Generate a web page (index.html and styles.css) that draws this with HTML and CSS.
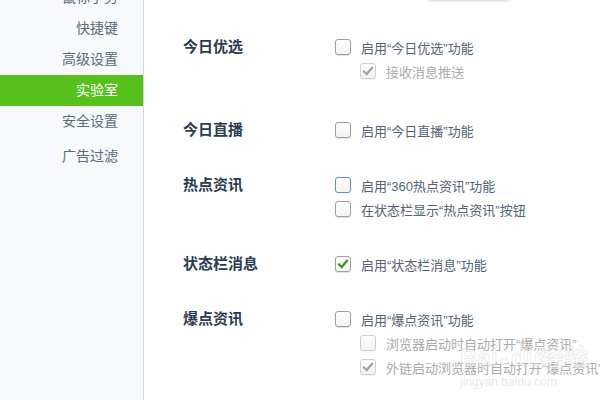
FILE: index.html
```html
<!DOCTYPE html>
<html lang="zh-CN">
<head>
<meta charset="utf-8">
<link rel="stylesheet" href="styles.css">
</head>
<body>
<div class="page">
  <nav class="sidebar">
    <div class="nav-item">鼠标手势</div>
    <div class="nav-item">快捷键</div>
    <div class="nav-item">高级设置</div>
    <div class="nav-item active">实验室</div>
    <div class="nav-item">安全设置</div>
    <div class="nav-item last">广告过滤</div>
  </nav>
  <main class="main">
    <div class="topbar"><div class="top-box"></div></div>

    <section class="section first">
      <div class="heading">今日优选</div>
      <div class="options">
        <div class="row"><span class="cb"></span><span class="label">启用“今日优选”功能</span></div>
        <div class="row sub disabled"><span class="cb checked gray"><svg viewBox="0 0 16 16"><path d="M3.5 8.5 L6.5 11.5 L12.5 4.5" /></svg></span><span class="label">接收消息推送</span></div>
      </div>
    </section>

    <section class="section">
      <div class="heading">今日直播</div>
      <div class="options">
        <div class="row"><span class="cb"></span><span class="label">启用“今日直播”功能</span></div>
      </div>
    </section>

    <section class="section">
      <div class="heading">热点资讯</div>
      <div class="options">
        <div class="row"><span class="cb focus"></span><span class="label">启用“360热点资讯”功能</span></div>
        <div class="row"><span class="cb"></span><span class="label">在状态栏显示“热点资讯”按钮</span></div>
      </div>
    </section>

    <section class="section">
      <div class="heading">状态栏消息</div>
      <div class="options">
        <div class="row"><span class="cb checked green"><svg viewBox="0 0 16 16"><path d="M3.5 8.5 L6.5 11.5 L12.5 4.5" /></svg></span><span class="label">启用“状态栏消息”功能</span></div>
      </div>
    </section>

    <section class="section">
      <div class="heading">爆点资讯</div>
      <div class="options">
        <div class="row"><span class="cb"></span><span class="label">启用“爆点资讯”功能</span></div>
        <div class="row sub disabled"><span class="cb"></span><span class="label">浏览器启动时自动打开“爆点资讯”</span></div>
        <div class="row sub disabled"><span class="cb checked gray"><svg viewBox="0 0 16 16"><path d="M3.5 8.5 L6.5 11.5 L12.5 4.5" /></svg></span><span class="label">外链启动浏览器时自动打开“爆点资讯”</span></div>
      </div>
    </section>

    <div class="watermark">
      <div class="wm-main">Bai<span class="wm-paw">●</span>du经验</div>
      <div class="wm-url">jingyan.baidu.com</div>
    </div>
  </main>
</div>
</body>
</html>
```

FILE: styles.css
```css
html, body {
  margin: 0;
  padding: 0;
  background: #ffffff;
}

body {
  font-family: "Liberation Sans", "Noto Sans CJK SC", sans-serif;
  width: 600px;
  height: 400px;
  overflow: hidden;
}

.page {
  display: flex;
  height: 400px;
}

.sidebar {
  width: 143px;
  flex: none;
  background: #f7f9fc;
  border-right: 1px solid #d3d6da;
  margin-top: -18px;
  height: 418px;
}

.nav-item {
  height: 31px;
  line-height: 31px;
  font-size: 14px;
  color: #5b6b80;
  text-align: right;
  padding-right: 25px;
}

.nav-item.active {
  background: #56c11c;
  color: #ffffff;
}

.nav-item.last {
  margin-top: 4px;
}

.main {
  flex: 1;
  position: relative;
  padding-left: 39px;
}

.topbar {
  height: 35px;
  display: flex;
}

.top-box {
  width: 82px;
  height: 30px;
  margin-top: -30px;
  margin-left: 245px;
  background: #ffffff;
  border-radius: 3px;
  box-shadow: 0 1px 3px rgba(0, 0, 0, 0.18);
}

.section {
  display: flex;
  margin-bottom: 31px;
}

.section.first {
  margin-bottom: 35px;
}

.heading {
  width: 152px;
  flex: none;
  height: 24px;
  line-height: 24px;
  font-size: 15px;
  font-weight: bold;
  color: #2a3c52;
}

.options {
  display: flex;
  flex-direction: column;
}

.row {
  height: 24px;
  display: flex;
  align-items: center;
  gap: 10px;
}

.row.sub {
  padding-left: 25px;
}

.label {
  font-size: 13px;
  color: #536479;
  white-space: nowrap;
}

.row.disabled .label {
  color: #ababab;
}

.cb {
  width: 14px;
  height: 14px;
  flex: none;
  border: 1px solid #9e9e9e;
  border-radius: 3px;
  background: linear-gradient(#ffffff, #f3f3f3);
  box-shadow: 0 1px 1px rgba(0, 0, 0, 0.12);
  display: flex;
  align-items: center;
  justify-content: center;
}

.row.disabled .cb {
  border-color: #cfcfcf;
  box-shadow: 0 1px 1px rgba(0, 0, 0, 0.05);
}

.cb.focus {
  border-color: #5a8fe6;
  box-shadow: 0 0 1px rgba(90, 143, 230, 0.5);
}

.cb svg {
  width: 14px;
  height: 14px;
  fill: none;
  stroke-width: 2.6;
  stroke-linecap: square;
}

.cb.green svg {
  stroke: #2d9b1e;
}

.cb.gray svg {
  stroke: #a2a2a2;
}

.watermark {
  position: absolute;
  left: 316px;
  top: 344px;
  pointer-events: none;
  white-space: nowrap;
}

.wm-main {
  font-size: 24px;
  font-weight: bold;
  line-height: 28px;
  color: rgba(255, 255, 255, 0.4);
  -webkit-text-stroke: 1px rgba(200, 200, 200, 0.35);
}

.wm-paw {
  font-size: 16px;
  padding: 0 2px;
}

.wm-url {
  font-size: 12px;
  line-height: 14px;
  color: rgba(200, 200, 200, 0.45);
}
```
